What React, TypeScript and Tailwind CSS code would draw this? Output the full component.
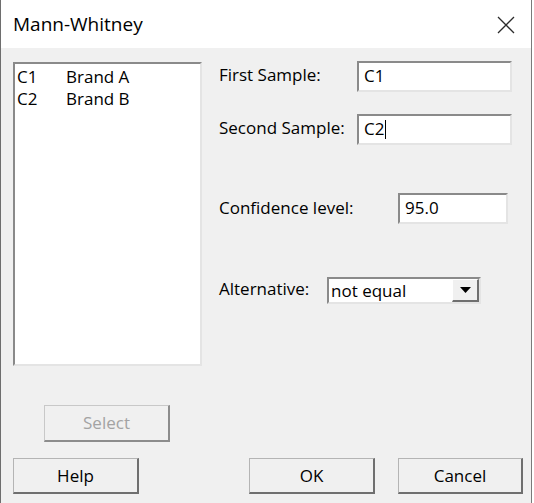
import React from "react";

const sunken =
  "border-2 border-t-[#8a8a8a] border-l-[#8a8a8a] border-r-[#e4e4e4] border-b-[#e4e4e4] bg-white";
const raised =
  "border-t border-l border-r-2 border-b-2 border-t-[#b4b4b4] border-l-[#b4b4b4] border-r-[#6f6f6f] border-b-[#6f6f6f] bg-[#f0f0f0] flex items-center justify-center";

function TextBox({ w, value, caret }: { w: string; value: string; caret?: boolean }) {
  return (
    <div className={`${sunken} ${w} h-[31px] flex items-center pl-[5px] pb-[1px]`}>
      <span className="leading-[22px]">{value}</span>
      {caret && <span className="inline-block w-[1px] h-[19px] bg-black ml-[1px]" />}
    </div>
  );
}

export default function App() {
  return (
    <div className="w-[534px] h-[503px] bg-white flex font-['Open_Sans','Noto_Sans',sans-serif] text-[17px] text-black overflow-hidden">
      <div className="w-[532px] h-full border-l border-r border-l-[#6e6e6e] border-r-[#7a7a7a] flex flex-col">
        {/* Title bar */}
        <div className="h-[48px] bg-white flex items-center justify-between pl-[12px] pr-[16px] shrink-0">
          <span className="text-[19px] leading-[24px]">Mann-Whitney</span>
          <svg width="18" height="18" viewBox="0 0 18 18" className="mt-[1px]">
            <path d="M1 1 L17 17 M17 1 L1 17" stroke="#2b2b2b" strokeWidth="1.3" fill="none" />
          </svg>
        </div>
        {/* Body */}
        <div className="flex-1 bg-[#f0f0f0] flex flex-col pl-[12px] pt-[14px]">
          <div className="flex items-start">
            <div className={`${sunken} w-[189px] h-[304px] pt-[2px] pl-[2px] leading-[22px]`}>
              <div>
                <span className="inline-block w-[49px]">C1</span>Brand A
              </div>
              <div>
                <span className="inline-block w-[49px]">C2</span>Brand B
              </div>
            </div>
            <div className="ml-[17px] mt-[-1px] flex flex-col">
              <div className="flex items-center">
                <span className="w-[138px] leading-[22px] mb-[4px]">First Sample:</span>
                <TextBox w="w-[155px]" value="C1" />
              </div>
              <div className="flex items-center mt-[22px]">
                <span className="w-[138px] leading-[22px] mb-[4px]">Second Sample:</span>
                <TextBox w="w-[155px]" value="C2" caret />
              </div>
              <div className="flex items-center mt-[48px]">
                <span className="w-[179px] leading-[22px] mb-[2px]">Confidence level:</span>
                <TextBox w="w-[110px]" value="95.0" />
              </div>
              <div className="flex items-center mt-[53px]">
                <span className="w-[108px] leading-[22px] mb-[4px]">Alternative:</span>
                <div className="w-[154px] h-[27px] border-2 border-t-[#8a8a8a] border-l-[#8a8a8a] border-r-[#e4e4e4] border-b-[#e4e4e4] bg-white flex items-stretch">
                  <span className="flex-1 pl-[2px] leading-[22px] flex items-center">not equal</span>
                  <div className="w-[27px] bg-[#f0f0f0] border-t border-l border-r-2 border-b-2 border-t-white border-l-white border-r-[#6f6f6f] border-b-[#6f6f6f] flex items-center justify-center">
                    <svg width="11" height="6" viewBox="0 0 11 6">
                      <path d="M0 0 L11 0 L5.5 6 Z" fill="#000" />
                    </svg>
                  </div>
                </div>
              </div>
            </div>
          </div>
          {/* Select */}
          <div className="mt-[39px] ml-[31px]">
            <div className="w-[126px] h-[37px] border-t border-l border-r-2 border-b-2 border-t-[#c8c8c8] border-l-[#c8c8c8] border-r-[#8c8c8c] border-b-[#8c8c8c] bg-[#f0f0f0] flex items-center justify-center text-[#a3a3a3]">
              Select
            </div>
          </div>
          {/* Bottom buttons */}
          <div className="mt-[16px] flex">
            <div className={`${raised} w-[126px] h-[36px]`}>Help</div>
            <div className={`${raised} w-[126px] h-[36px] ml-[110px]`}>OK</div>
            <div className={`${raised} w-[125px] h-[36px] ml-[23px]`}>Cancel</div>
          </div>
        </div>
      </div>
    </div>
  );
}
